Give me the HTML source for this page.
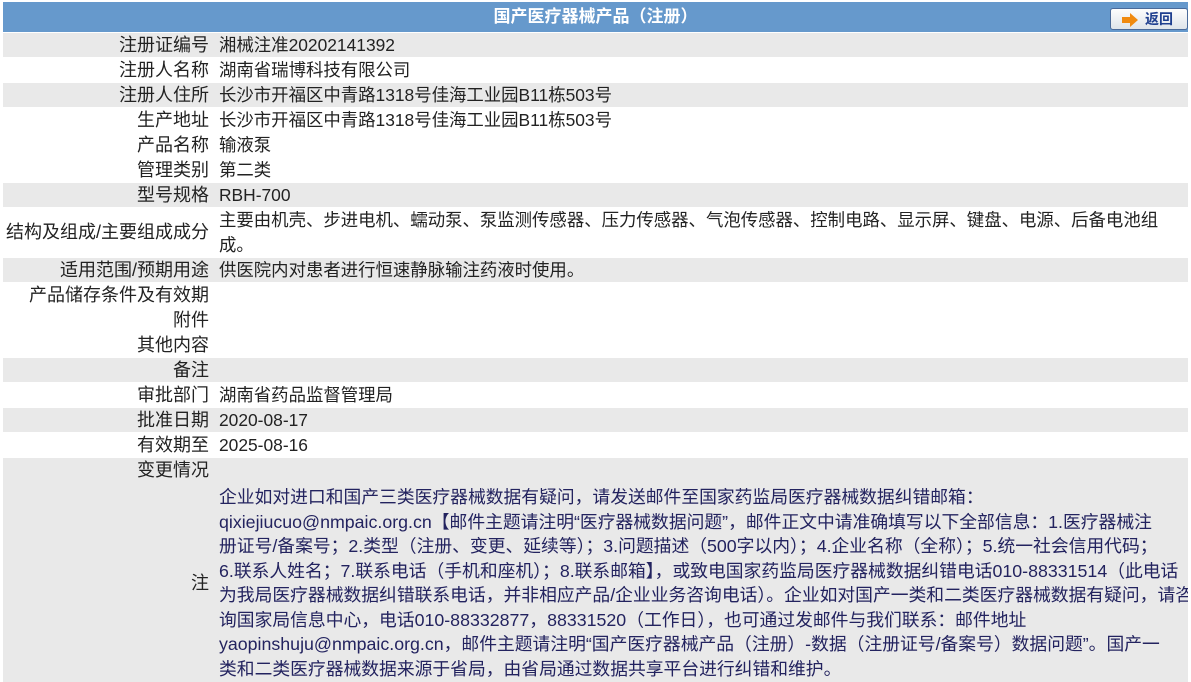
<!DOCTYPE html>
<html><head><meta charset="utf-8"><style>
*{margin:0;padding:0;box-sizing:border-box}
body{width:1191px;height:682px;overflow:hidden;background:#fff;font-family:"Liberation Sans","Noto Sans CJK SC",sans-serif;font-size:18px;color:#222}
.hd{position:absolute;left:3px;top:2px;width:1185px;height:30px;background:#6699cc;color:#fff;font-weight:bold;text-align:center;line-height:30px;font-size:17px}
.btn{position:absolute;left:1107px;top:6px;width:78px;height:22px;border:1px solid #4a6a9a;border-radius:3px;background:linear-gradient(#fdfdfd,#dfe4ea);color:#1f3f8f;font-weight:bold;font-size:14px;line-height:20px;text-align:left;padding-left:34px}
.btn svg{position:absolute;left:10px;top:4px}
.r{position:absolute;left:3px;width:1185px;height:24px;line-height:24px;white-space:nowrap;overflow:hidden}
.g{background:#e9e9e9}
.l{position:absolute;left:0;width:206px;text-align:right}
.v{position:absolute;left:216px;right:0;font-size:17.4px}
.note{color:#23235f;line-height:24.5px;top:2px;font-size:17.8px}
</style></head><body>
<div class="hd">国产医疗器械产品（注册）<div class="btn"><svg width="18" height="14" viewBox="0 0 18 14"><path d="M1 4h8V0l8 7-8 7v-4H1z" fill="#f08a10"/></svg>返回</div></div>

<div class="r g" style="top:33px"><span class="l">注册证编号</span><span class="v">湘械注准20202141392</span></div>
<div class="r" style="top:58px"><span class="l">注册人名称</span><span class="v">湖南省瑞博科技有限公司</span></div>
<div class="r g" style="top:83px"><span class="l">注册人住所</span><span class="v">长沙市开福区中青路1318号佳海工业园B11栋503号</span></div>
<div class="r" style="top:108px"><span class="l">生产地址</span><span class="v">长沙市开福区中青路1318号佳海工业园B11栋503号</span></div>
<div class="r" style="top:133px"><span class="l">产品名称</span><span class="v">输液泵</span></div>
<div class="r" style="top:158px"><span class="l">管理类别</span><span class="v">第二类</span></div>
<div class="r g" style="top:183px"><span class="l">型号规格</span><span class="v">RBH-700</span></div>
<div class="r" style="top:208px;height:49px"><span class="l" style="top:12px">结构及组成/主要组成成分</span><span class="v" style="line-height:25px">主要由机壳、步进电机、蠕动泵、泵监测传感器、压力传感器、气泡传感器、控制电路、显示屏、键盘、电源、后备电池组<br>成。</span></div>
<div class="r g" style="top:258px"><span class="l">适用范围/预期用途</span><span class="v">供医院内对患者进行恒速静脉输注药液时使用。</span></div>
<div class="r" style="top:283px"><span class="l">产品储存条件及有效期</span></div>
<div class="r" style="top:308px"><span class="l">附件</span></div>
<div class="r" style="top:333px"><span class="l">其他内容</span></div>
<div class="r g" style="top:358px"><span class="l">备注</span></div>
<div class="r" style="top:383px"><span class="l">审批部门</span><span class="v">湖南省药品监督管理局</span></div>
<div class="r g" style="top:408px"><span class="l">批准日期</span><span class="v">2020-08-17</span></div>
<div class="r" style="top:433px"><span class="l">有效期至</span><span class="v">2025-08-16</span></div>
<div class="r g" style="top:458px;height:25px"><span class="l">变更情况</span></div>
<div class="r g" style="top:483px;height:199px"><span class="l" style="top:88px">注</span><span class="v note">企业如对进口和国产三类医疗器械数据有疑问，请发送邮件至国家药监局医疗器械数据纠错邮箱：<br>qixiejiucuo@nmpaic.org.cn【邮件主题请注明“医疗器械数据问题”，邮件正文中请准确填写以下全部信息：1.医疗器械注<br>册证号/备案号；2.类型（注册、变更、延续等）；3.问题描述（500字以内）；4.企业名称（全称）；5.统一社会信用代码；<br>6.联系人姓名；7.联系电话（手机和座机）；8.联系邮箱】，或致电国家药监局医疗器械数据纠错电话010-88331514（此电话<br>为我局医疗器械数据纠错联系电话，并非相应产品/企业业务咨询电话）。企业如对国产一类和二类医疗器械数据有疑问，请咨<br>询国家局信息中心，电话010-88332877，88331520（工作日），也可通过发邮件与我们联系：邮件地址<br>yaopinshuju@nmpaic.org.cn，邮件主题请注明“国产医疗器械产品（注册）-数据（注册证号/备案号）数据问题”。国产一<br>类和二类医疗器械数据来源于省局，由省局通过数据共享平台进行纠错和维护。</span></div>
</body></html>
